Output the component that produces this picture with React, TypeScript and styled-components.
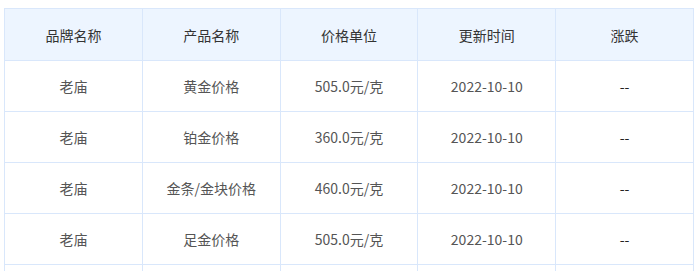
import React from "react";
import styled, { createGlobalStyle } from "styled-components";

const GlobalStyle = createGlobalStyle`
  html, body {
    margin: 0;
    padding: 0;
    background: #fff;
  }
  body {
    font-family: "Microsoft YaHei", "Noto Sans CJK SC", "Noto Sans", sans-serif;
  }
`;

const Wrapper = styled.div`
  padding: 8px 4px 0 4px;
`;

const Table = styled.table`
  width: 690px;
  table-layout: fixed;
  border-collapse: separate;
  border-spacing: 0;
  border-top: 1px solid #d9e7fb;
  border-left: 1px solid #d9e7fb;
  font-size: 14px;
`;

const Th = styled.th`
  height: 51px;
  padding: 0;
  background: #edf5ff;
  color: #333;
  font-weight: normal;
  text-align: center;
  border-right: 1px solid #d9e7fb;
  border-bottom: 1px solid #d9e7fb;
`;

const Td = styled.td<{ $dark?: boolean }>`
  height: 50px;
  padding: 0;
  color: ${(p) => (p.$dark ? "#222" : "#555")};
  text-align: center;
  border-right: 1px solid #d9e7fb;
  border-bottom: 1px solid #d9e7fb;
`;

const headers = ["品牌名称", "产品名称", "价格单位", "更新时间", "涨跌"];

const rows = [
  { brand: "老庙", name: "黄金价格", price: "505.0元/克", date: "2022-10-10", change: "--" },
  { brand: "老庙", name: "铂金价格", price: "360.0元/克", date: "2022-10-10", change: "--" },
  { brand: "老庙", name: "金条/金块价格", price: "460.0元/克", date: "2022-10-10", change: "--" },
  { brand: "老庙", name: "足金价格", price: "505.0元/克", date: "2022-10-10", change: "--" },
  { brand: "老庙", name: "千足金价格", price: "505.0元/克", date: "2022-10-10", change: "--" },
];

const App: React.FC = () => {
  return (
    <Wrapper>
      <GlobalStyle />
      <Table>
        <thead>
          <tr>
            {headers.map((h) => (
              <Th key={h}>{h}</Th>
            ))}
          </tr>
        </thead>
        <tbody>
          {rows.map((r, i) => (
            <tr key={i}>
              <Td>{r.brand}</Td>
              <Td>{r.name}</Td>
              <Td>{r.price}</Td>
              <Td>{r.date}</Td>
              <Td $dark>{r.change}</Td>
            </tr>
          ))}
        </tbody>
      </Table>
    </Wrapper>
  );
};

export default App;
